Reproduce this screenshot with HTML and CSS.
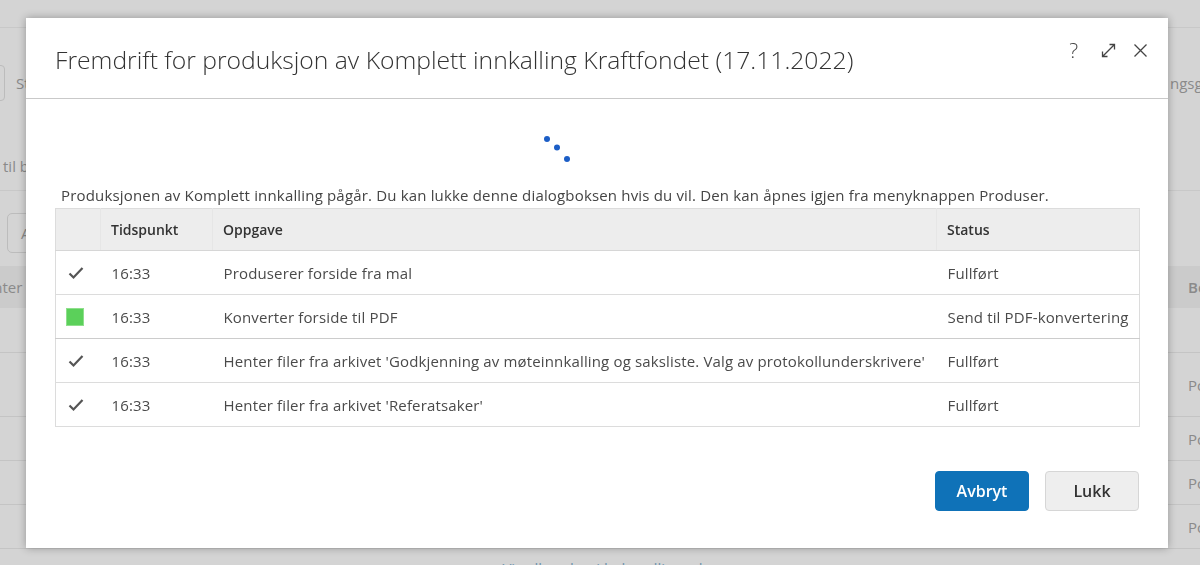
FILE: index.html
```html
<!DOCTYPE html>
<html lang="no">
<head>
    <meta charset="UTF-8">
    <meta name="viewport" content="width=device-width, initial-scale=1.0">
    <title>Fremdrift for produksjon</title>
    <link rel="stylesheet" href="styles.css">
</head>
<body>
    <!-- underliggende side (dempet av modalen) -->
    <div class="page">
        <div class="page-top"></div>
        <div class="page-toolbar">
            <div class="page-left">
                <span class="page-box"></span>
                <span class="page-text">Status</span>
            </div>
            <span class="page-text page-right">ngsgruppe</span>
        </div>
        <div class="page-line-row">
            <span class="page-text page-shift">til behandling</span>
        </div>
        <div class="page-actions">
            <span class="page-btn">Alle</span>
        </div>
        <div class="page-grid">
            <div class="page-head">
                <span class="page-text page-cut">Dokumenter</span>
                <span class="page-text page-end">Behandling</span>
            </div>
            <div class="page-row first"></div>
            <div class="page-row tall"><span class="page-text">Politisk</span></div>
            <div class="page-row"><span class="page-text">Politisk</span></div>
            <div class="page-row"><span class="page-text">Politisk</span></div>
            <div class="page-row"><span class="page-text">Politisk</span></div>
            <div class="page-link">Vis alle saker i behandlingsplanen</div>
        </div>
    </div>

    <div class="overlay">
        <div class="dialog">
            <div class="dialog-header">
                <h1>Fremdrift for produksjon av Komplett innkalling Kraftfondet (17.11.2022)</h1>
                <div class="header-tools">
                    <span class="tool help">?</span>
                    <svg class="tool" width="17" height="17" viewBox="0 0 17 17">
                        <path d="M2.5 14.5 L14.5 2.5 M9.5 2.5 H14.5 V7.5 M2.5 9.5 V14.5 H7.5" fill="none" stroke="#444" stroke-width="1.3"/>
                    </svg>
                    <svg class="tool" width="15" height="15" viewBox="0 0 15 15">
                        <path d="M1.5 1.5 L13.5 13.5 M13.5 1.5 L1.5 13.5" fill="none" stroke="#444" stroke-width="1.3"/>
                    </svg>
                </div>
            </div>

            <div class="dialog-body">
                <svg class="spinner" width="34" height="34" viewBox="0 0 34 34">
                    <circle cx="7" cy="7" r="3" fill="#1c5ec6"/>
                    <circle cx="17" cy="15.5" r="3" fill="#1c5ec6"/>
                    <circle cx="27" cy="27" r="3" fill="#1c5ec6"/>
                </svg>
                <p class="info">Produksjonen av Komplett innkalling pågår. Du kan lukke denne dialogboksen hvis du vil. Den kan åpnes igjen fra menyknappen Produser.</p>

                <table class="progress">
                    <thead>
                        <tr>
                            <th class="col-icon"></th>
                            <th class="col-time">Tidspunkt</th>
                            <th class="col-task">Oppgave</th>
                            <th class="col-status">Status</th>
                        </tr>
                    </thead>
                    <tbody>
                        <tr>
                            <td class="col-icon"><svg class="check" width="16" height="14" viewBox="0 0 16 14"><path d="M1.5 7.5 L5.5 11.5 L14.5 2" fill="none" stroke="#555" stroke-width="2.2"/></svg></td>
                            <td>16:33</td>
                            <td>Produserer forside fra mal</td>
                            <td>Fullført</td>
                        </tr>
                        <tr class="active">
                            <td class="col-icon"><span class="running"></span></td>
                            <td>16:33</td>
                            <td>Konverter forside til PDF</td>
                            <td>Send til PDF-konvertering</td>
                        </tr>
                        <tr>
                            <td class="col-icon"><svg class="check" width="16" height="14" viewBox="0 0 16 14"><path d="M1.5 7.5 L5.5 11.5 L14.5 2" fill="none" stroke="#555" stroke-width="2.2"/></svg></td>
                            <td>16:33</td>
                            <td>Henter filer fra arkivet 'Godkjenning av møteinnkalling og saksliste. Valg av protokollunderskrivere'</td>
                            <td>Fullført</td>
                        </tr>
                        <tr>
                            <td class="col-icon"><svg class="check" width="16" height="14" viewBox="0 0 16 14"><path d="M1.5 7.5 L5.5 11.5 L14.5 2" fill="none" stroke="#555" stroke-width="2.2"/></svg></td>
                            <td>16:33</td>
                            <td>Henter filer fra arkivet 'Referatsaker'</td>
                            <td>Fullført</td>
                        </tr>
                    </tbody>
                </table>
            </div>

            <div class="dialog-footer">
                <button class="btn primary">Avbryt</button>
                <button class="btn">Lukk</button>
            </div>
        </div>
    </div>
</body>
</html>
```

FILE: styles.css
```css
body {
    margin: 0;
    font-family: 'Open Sans', 'Liberation Sans', Arial, sans-serif;
    background: #d4d4d4;
    color: #444;
    overflow: hidden;
    height: 565px;
}

/* underliggende side */
.page {
    position: relative;
    height: 565px;
    overflow: hidden;
}
.page-top {
    height: 27px;
    border-bottom: 1px solid #c8c8c8;
}
.page-toolbar {
    display: flex;
    justify-content: space-between;
    align-items: center;
    margin-top: 37px;
    height: 36px;
}
.page-left {
    display: flex;
    align-items: center;
    gap: 11px;
}
.page-box {
    width: 40px;
    height: 34px;
    margin-left: -37px;
    border: 1px solid #bcbcbc;
    border-radius: 4px;
}
.page-text {
    font-size: 15px;
    color: #8a8a8a;
    white-space: nowrap;
}
.page-right {
    width: 30px;
    overflow: hidden;
}
.page-line-row {
    height: 62px;
    display: flex;
    align-items: flex-end;
    border-bottom: 1px solid #c8c8c8;
    padding: 0 0 14px 3px;
    box-sizing: border-box;
    margin-top: 28px;
}
.page-actions {
    padding: 22px 0 0 7px;
    height: 62px;
    box-sizing: border-box;
}
.page-btn {
    display: inline-block;
    width: 50px;
    height: 38px;
    line-height: 38px;
    padding-left: 13px;
    border: 1px solid #bcbcbc;
    border-radius: 5px;
    font-size: 15px;
    color: #8a8a8a;
}
.page-grid {
    margin-top: 13px;
}
.page-head {
    display: flex;
    justify-content: space-between;
    align-items: center;
    height: 42px;
    background: #cbcbcb;
    font-weight: 600;
}
.page-cut {
    margin-left: -66px;
    font-weight: 400;
}
.page-end {
    width: 12px;
    overflow: hidden;
}
.page-row {
    display: flex;
    align-items: center;
    height: 43px;
    padding-left: 1188px;
    border-bottom: 1px solid #c4c4c4;
}
.page-row.first {
    height: 44px;
}
.page-row.tall {
    height: 63px;
}
.page-link {
    text-align: center;
    padding-top: 9px;
    padding-left: 40px;
    font-size: 15px;
    color: #6f93ac;
}

/* modal */
.overlay {
    position: fixed;
    top: 0;
    left: 0;
    width: 100%;
    height: 100%;
}
.dialog {
    margin: 18px 0 0 26px;
    width: 1142px;
    height: 530px;
    background: #fff;
    box-shadow: 0 0 8px rgba(0, 0, 0, 0.3);
    display: flex;
    flex-direction: column;
}
.dialog-header {
    display: flex;
    justify-content: space-between;
    align-items: flex-start;
    padding: 26px 20px 22px 29px;
    height: 32px;
    border-bottom: 1px solid #c9c9c9;
    box-sizing: content-box;
}
.dialog-header h1 {
    margin: 0;
    font-size: 24.7px;
    font-weight: 300;
    line-height: 32px;
    color: #333;
}
.header-tools {
    display: flex;
    align-items: center;
    gap: 16px;
    margin-top: -6px;
}
.tool {
    display: block;
}
.help {
    font-size: 21px;
    font-weight: 300;
    color: #444;
    line-height: 24px;
    margin-right: 6px;
}
.dialog-body {
    flex: 1;
    padding: 0 28px 0 29px;
}
.spinner {
    display: block;
    margin: 33px 0 0 485px;
}
.info {
    margin: 19px 0 3px 6px;
    font-size: 15px;
    letter-spacing: 0.17px;
    line-height: 20px;
    color: #444;
}
.progress {
    width: 1085px;
    border-collapse: collapse;
    border: 1px solid #dcdcdc;
    font-size: 15px;
    letter-spacing: 0.15px;
}
.progress th {
    height: 41px;
    background: #ededed;
    text-align: left;
    font-weight: 600;
    font-size: 14px;
    letter-spacing: 0;
    color: #333;
    padding: 0 10px;
    border-left: 1px solid #e6e6e6;
    border-bottom: 1px solid #d6d6d6;
}
.progress th:first-child {
    border-left: none;
}
.progress td {
    height: 43px;
    padding: 0 10px 0 11px;
    color: #4a4a4a;
    border-bottom: 1px solid #dcdcdc;
    white-space: nowrap;
}
.progress tr.active td {
    border-bottom-color: #cccccc;
}
.progress th.col-icon, .progress td.col-icon {
    width: 24px;
    padding: 0 10px 0 10px;
}
.col-time {
    width: 91px;
}
.col-status {
    width: 182px;
}
.check {
    display: block;
    margin-left: 2px;
}
.running {
    display: block;
    width: 16px;
    height: 16px;
    background: #5bd05a;
    border: 1px solid #8fdf8c;
}
.dialog-footer {
    display: flex;
    justify-content: flex-end;
    gap: 16px;
    padding: 0 29px 37px 0;
}
.btn {
    width: 94px;
    height: 40px;
    border: 1px solid #d6d6d6;
    border-radius: 4px;
    background: #eeeeee;
    color: #333;
    font-family: 'Open Sans', 'Liberation Sans', Arial, sans-serif;
    font-size: 16px;
    font-weight: 600;
}
.btn.primary {
    background: #0f72b8;
    border-color: #0f72b8;
    color: #fff;
}
```
